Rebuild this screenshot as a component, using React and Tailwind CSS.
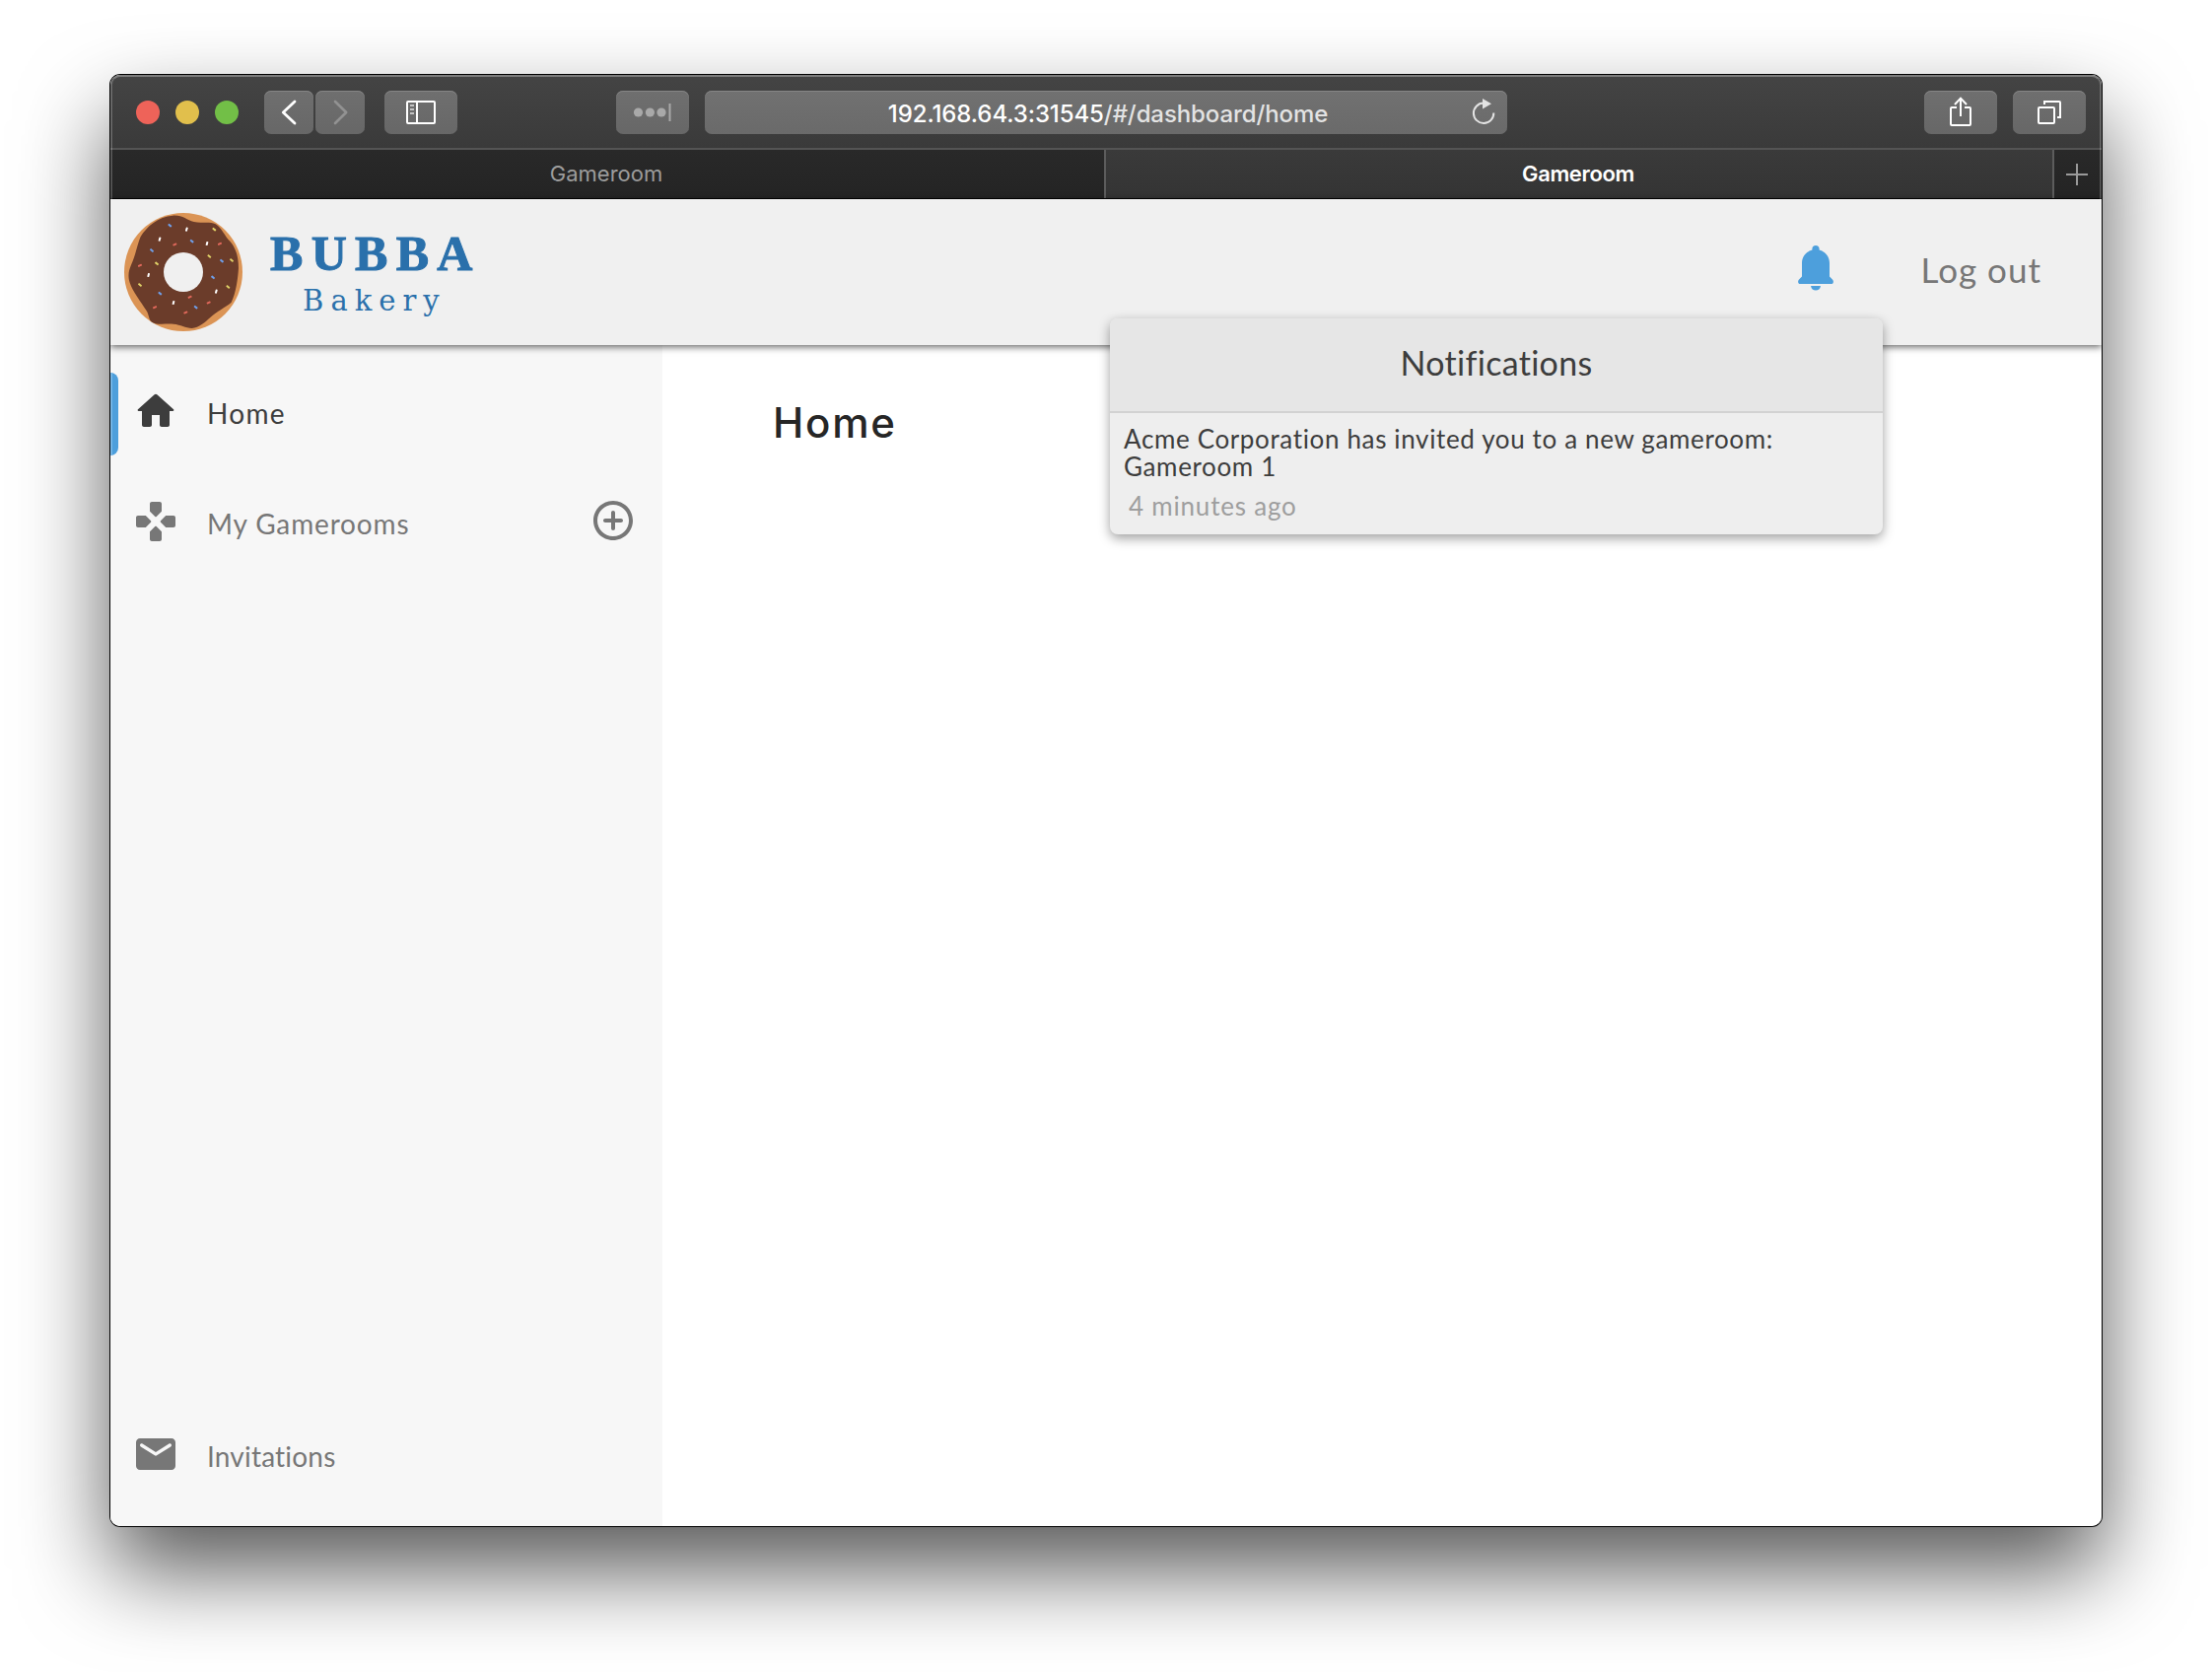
import React from "react";

const ICONS = {
  home: "M10 19v-5h4v5c0 .55.45 1 1 1h3c.55 0 1-.45 1-1v-7h1.7c.46 0 .68-.57.33-.87L12.67 3.6c-.38-.34-.96-.34-1.34 0l-8.36 7.53c-.34.3-.13.87.33.87H5v7c0 .55.45 1 1 1h3c.55 0 1-.45 1-1z",
  gamepad:
    "M15 6.67V3c0-.55-.45-1-1-1h-4c-.55 0-1 .45-1 1v3.67c0 .13.05.26.15.35l2.5 2.5c.2.2.51.2.71 0l2.5-2.5c.09-.09.14-.21.14-.35zM6.67 9H3c-.55 0-1 .45-1 1v4c0 .55.45 1 1 1h3.67c.13 0 .26-.05.35-.15l2.5-2.5c.2-.2.2-.51 0-.71l-2.5-2.5C6.93 9.05 6.8 9 6.67 9zM9 17.33V21c0 .55.45 1 1 1h4c.55 0 1-.45 1-1v-3.67c0-.13-.05-.26-.15-.35l-2.5-2.5c-.2-.2-.51-.2-.71 0l-2.5 2.5c-.09.09-.14.21-.14.35zm7.98-8.18l-2.5 2.5c-.2.2-.2.51 0 .71l2.5 2.5c.09.09.22.15.35.15H21c.55 0 1-.45 1-1v-4c0-.55-.45-1-1-1h-3.67c-.13-.01-.26.04-.35.14z",
  addCircle:
    "M12 7c-.55 0-1 .45-1 1v3H8c-.55 0-1 .45-1 1s.45 1 1 1h3v3c0 .55.45 1 1 1s1-.45 1-1v-3h3c.55 0 1-.45 1-1s-.45-1-1-1h-3V8c0-.55-.45-1-1-1zm0-5C6.48 2 2 6.48 2 12s4.48 10 10 10 10-4.48 10-10S17.52 2 12 2zm0 18c-4.41 0-8-3.59-8-8s3.59-8 8-8 8 3.59 8 8-3.59 8-8 8z",
  mail: "M20 4H4c-1.1 0-2 .9-2 2v12c0 1.1.9 2 2 2h16c1.1 0 2-.9 2-2V6c0-1.1-.9-2-2-2zm-.4 4.25l-7.07 4.42c-.32.2-.74.2-1.06 0L4.4 8.25c-.25-.16-.4-.43-.4-.72 0-.67.73-1.07 1.3-.72L12 11l6.7-4.19c.57-.35 1.3.05 1.3.72 0 .29-.15.56-.4.72z",
};

const SPRINKLES = [
  { color: "#6f9fe8", angle: 40, at: [[139, 38], [206, 86], [84, 114], [297, 146], [270, 196], [109, 245], [218, 287]] },
  { color: "#ffffff", angle: 105, at: [[190, 50], [108, 80], [252, 93], [74, 189], [150, 273], [280, 239]] },
  { color: "#e0d267", angle: 38, at: [[274, 50], [259, 132], [327, 144], [99, 154], [48, 219], [316, 225]] },
  { color: "#e0685b", angle: -25, at: [[154, 96], [291, 94], [48, 160], [200, 256], [257, 273], [93, 287], [187, 303]] },
];

function Icon({ name, className = "" }) {
  return (
    <svg viewBox="0 0 24 24" className={"size-12 fill-current " + className}>
      <path d={ICONS[name]} />
    </svg>
  );
}

function Donut() {
  return (
    <svg viewBox="0 0 360 360" className="size-[120px]">
      <circle cx="180" cy="180" r="180" fill="#db9455" />
      <path
        fill="#6b3c2a"
        d="M148 8C178 6 190 22 212 27C240 32 262 26 278 34C298 46 306 72 322 86C340 106 348 135 348 168C346 200 340 245 326 272C308 288 280 300 262 318C246 332 228 350 206 351C186 350 172 340 150 338C125 336 100 342 84 332C74 325 76 310 68 298C50 268 26 240 17 212C10 190 14 175 22 156C34 130 40 95 50 72C68 42 104 10 148 8Z"
      />
      <circle cx="180" cy="180" r="60" fill="#f0f0f0" />
      {SPRINKLES.map((s) =>
        s.at.map(([x, y]) => (
          <rect key={x + "-" + y} x={x - 6} y={y - 3} width="12" height="6" rx="1.5" fill={s.color} transform={`rotate(${s.angle} ${x} ${y})`} />
        ))
      )}
    </svg>
  );
}

function ToolButton({ className = "w-[74px]", children }) {
  return (
    <div className={"h-11 shrink-0 rounded-[7px] bg-gradient-to-b from-[#6f6f6f] to-[#676767] shadow-[inset_0_1px_0_#858585] " + className}>
      <svg className="h-11 w-full" fill="none" stroke="#fff" strokeWidth="2">
        {children}
      </svg>
    </div>
  );
}

function Toolbar() {
  return (
    <div className="flex h-[74px] items-start bg-gradient-to-b from-[#444] to-[#3a3a3a] pt-4 pl-[26px] pr-4">
      <div className="mt-2.5 flex gap-4">
        <span className="size-6 rounded-full bg-[#ee6359]" />
        <span className="size-6 rounded-full bg-[#e1bf4c]" />
        <span className="size-6 rounded-full bg-[#72bf47]" />
      </div>
      <div className="ml-[26px] flex gap-0.5">
        <ToolButton className="w-[50px]">
          <path d="M31 11L19.3 22L31 33" strokeWidth="2.8" strokeLinecap="round" strokeLinejoin="round" />
        </ToolButton>
        <ToolButton className="w-[50px]">
          <path d="M20 11L31.2 22L20 33" stroke="#929292" strokeWidth="2.6" strokeLinecap="round" strokeLinejoin="round" />
        </ToolButton>
      </div>
      <ToolButton className="ml-5 w-[74px]">
        <rect x="23" y="11" width="28" height="22" rx="1" />
        <path d="M33 11V33" />
        <path d="M26 15H30M26 19H30M26 23H30" stroke="#c4c4c4" />
      </ToolButton>
      <ToolButton className="ml-[161px] w-[74px]">
        <g fill="#a9a9a9" stroke="none">
          <circle cx="22.5" cy="22" r="4.6" />
          <circle cx="34.4" cy="22" r="4.6" />
          <circle cx="46" cy="22" r="4.6" />
          <rect x="53.5" y="13" width="2" height="18" />
        </g>
      </ToolButton>
      <div className="ml-4 flex h-11 w-[814px] rounded-[7px] bg-gradient-to-b from-[#717171] to-[#6a6a6a] pl-11 shadow-[inset_0_1px_0_#858585]">
        <div className="mt-px grow pl-1 text-center text-[24px] leading-[46px] font-medium tracking-[-0.1px] text-white">
          192.168.64.3:31545<span className="text-[#e3e3e3]">/#/dashboard/home</span>
        </div>
        <svg className="mr-1 h-11 w-10" fill="none" stroke="#e3e3e3" strokeWidth="2">
          <path d="M20 12.6A10.2 10.2 0 1 0 30.3 22.5" />
          <path d="M19 8L28 13.2L19 18.4Z" fill="#e3e3e3" stroke="none" />
        </svg>
      </div>
      <div className="ml-auto flex gap-4">
        <ToolButton>
          <path d="M33 17H28Q27 17 27 18V34Q27 35 28 35H46Q47 35 47 34V18Q47 17 46 17H41" />
          <path d="M37 26V8M31 14L37 7.6L43 14" />
        </ToolButton>
        <ToolButton>
          <rect x="26" y="17" width="16" height="16" rx="1" />
          <path d="M32 14V11H47Q48 11 48 12V27H45" />
        </ToolButton>
      </div>
    </div>
  );
}

function TabBar() {
  return (
    <div className="flex h-[52px] border-t-2 border-b border-t-[#545454] border-b-black text-center text-[22px] leading-[49px]">
      <div className="w-[1008px] bg-gradient-to-b from-[#292929] to-[#242424] pr-0.5 text-[#9c9c9c]">Gameroom</div>
      <div className="w-[964px] border-x-2 border-[#5c5c5c] bg-gradient-to-b from-[#3a3a3a] to-[#343434] pr-0.5 font-semibold tracking-[-0.35px] text-white">Gameroom</div>
      <div className="grow bg-gradient-to-b from-[#292929] to-[#242424]">
        <svg className="h-[49px] w-12" stroke="#9a9a9a" strokeWidth="2">
          <path d="M12 25H34M23 14V36" />
        </svg>
      </div>
    </div>
  );
}

function Header() {
  return (
    <header className="relative z-10 flex h-[148px] items-center bg-[#f0f0f0] pr-[61px] pl-3.5 shadow-[0_2px_7px_rgba(0,0,0,0.6)]">
      <Donut />
      <div className="mt-[7px] ml-7 flex flex-col items-center font-['Liberation_Serif',serif] text-[#2a70ab]">
        <div className="-mr-2 text-[50px] leading-[50px] font-bold tracking-[8.3px] [-webkit-text-stroke:1px_#2a70ab]">BUBBA</div>
        <div className="-mr-1.5 font-['DejaVu_Serif',serif] text-[29px] leading-[46px] tracking-[7px]">Bakery</div>
      </div>
      <svg viewBox="0 0 36 46" className="-mt-[9px] ml-auto h-[46px] w-9 fill-[#4d9fdc]">
        <path d="M18 0C20.3 0 21.6 1.6 21.6 3.4V4.6C28 6.2 32 11.5 32 18V31.6L35.2 34.8C36.6 36.4 35.8 39 33.6 39H2.4C.2 39 -.6 36.4 .8 34.8L4 31.6V18C4 11.5 8 6.2 14.4 4.6V3.4C14.4 1.6 15.7 0 18 0Z" />
        <path d="M13 41H23C22.6 44 20.6 45.6 18 45.6S13.4 44 13 41Z" />
      </svg>
      <div className="-mt-[7px] ml-[88px] text-[35px] leading-10 tracking-[1px] text-[#777]">Log out</div>
    </header>
  );
}

function NavItem({ icon, label, active, action, tracking = "tracking-[0.85px]" }) {
  return (
    <div className={"relative flex h-[84px] items-center pr-[26px] pl-[22px] " + (active ? "text-[#3d3d3d]" : "text-[#777]")}>
      {active && <span className="absolute top-0 left-0 h-[84px] w-2 rounded-r-lg border-l-2 border-[#73b4e5] bg-[#4d9fdc]" />}
      <Icon name={icon} className="-mt-1.5" />
      <span className={"-mt-[3px] ml-7 grow text-[28px] " + tracking}>{label}</span>
      {action && <Icon name={action} className="-mt-2" />}
    </div>
  );
}

function Notifications() {
  return (
    <div className="absolute top-[247px] left-[1014px] z-20 w-[784px] rounded-lg bg-[#eee] text-[#3d3d3d] shadow-[0_4px_12px_rgba(0,0,0,0.38)]">
      <div className="h-24 rounded-t-lg border-b-2 border-[#d2d2d2] bg-[#e6e6e6] text-center text-[34px] leading-[90px] tracking-[0.3px]">Notifications</div>
      <div className="h-[123px] px-3.5 pt-3">
        <p className="w-[700px] text-[26px] leading-7 tracking-[0.64px]">Acme Corporation has invited you to a new gameroom: Gameroom 1</p>
        <p className="mt-3 pl-[5px] text-[26px] leading-7 tracking-[0.8px] text-[#9e9e9e]">4 minutes ago</p>
      </div>
    </div>
  );
}

export default function App() {
  return (
    <div className="h-[1696px] w-[2244px] overflow-hidden bg-white pt-[76px] pl-28 font-['Inter',sans-serif]">
      <div className="relative h-[1472px] w-[2020px] rounded-[10px] shadow-[0_0_0_1px_#000,0_45px_90px_rgba(0,0,0,0.66)]">
        <div className="flex h-full flex-col overflow-hidden rounded-[10px] bg-white">
          <div className="relative">
            <Toolbar />
            <TabBar />
            <div className="pointer-events-none absolute inset-0 rounded-t-[10px] border-x-2 border-t-2 border-white/20 border-t-white/30" />
          </div>
          <div className="flex grow flex-col font-['Lato',sans-serif]">
            <Header />
            <div className="flex grow">
              <nav className="flex w-[560px] flex-col gap-7 bg-[#f7f7f7] py-7">
                <NavItem icon="home" label="Home" tracking="tracking-[1.3px]" active />
                <NavItem icon="gamepad" label="My Gamerooms" action="addCircle" />
                <div className="mt-auto">
                  <NavItem icon="mail" label="Invitations" tracking="tracking-[0.2px]" />
                </div>
              </nav>
              <main className="grow px-28 pt-[54px]">
                <h1 className="font-['Inter',sans-serif] text-[42px] leading-[50px] font-medium tracking-[1.8px] text-[#262626]">Home</h1>
              </main>
            </div>
          </div>
        </div>
        <div className="font-['Lato',sans-serif]">
          <Notifications />
        </div>
      </div>
    </div>
  );
}
